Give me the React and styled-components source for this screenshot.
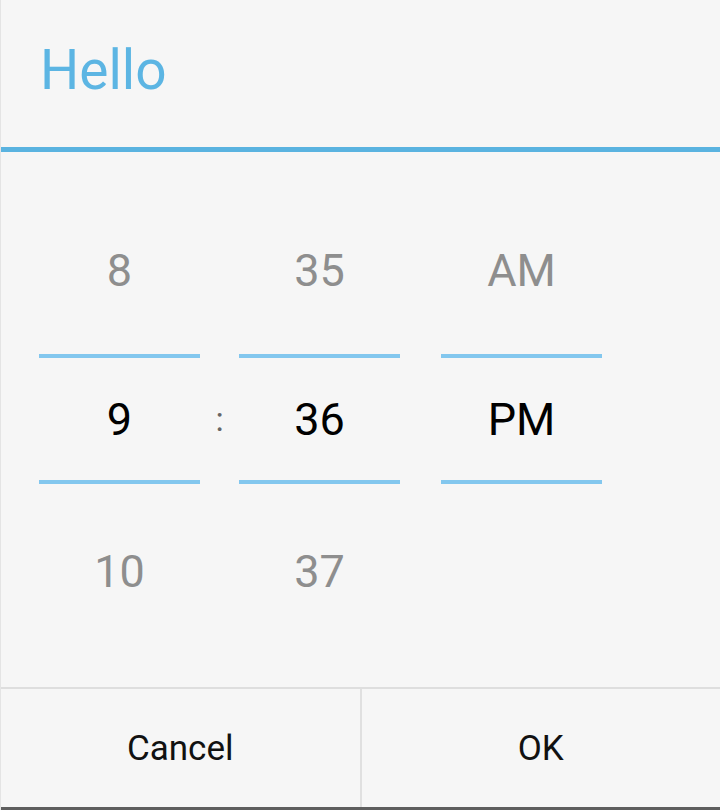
import React from "react";
import styled, { createGlobalStyle } from "styled-components";

const Global = createGlobalStyle`
  html, body { margin: 0; padding: 0; background: #f6f6f6; }
  body { font-family: Roboto, "Noto Sans", "Liberation Sans", sans-serif; }
  * { box-sizing: border-box; }
`;

const Dialog = styled.div`
  width: 720px;
  height: 810px;
  background: #f6f6f6;
  border-left: 1px solid #e4e4e4;
  display: flex;
  flex-direction: column;
`;

const Header = styled.div`
  height: 147px;
  padding: 38px 0 0 39px;
  font-size: 55px;
  line-height: 64px;
  color: #5cb5e3;
`;

const TitleDivider = styled.div`
  height: 5px;
  background: #5ab3e0;
`;

const PickerArea = styled.div`
  height: 535px;
  padding: 34px 0 0 38px;
  display: flex;
  align-items: flex-start;
`;

const Column = styled.div`
  width: 161px;
  display: flex;
  flex-direction: column;
`;

const Item = styled.div`
  height: ${(p) => p.$h}px;
  display: flex;
  align-items: center;
  justify-content: center;
  font-size: 45px;
  color: ${(p) => (p.$selected ? "#000" : "#8e8e8e")};
`;

const Line = styled.div`
  height: 4px;
  background: #83c7ee;
`;

const Separator = styled.div`
  width: ${(p) => p.$w}px;
  height: 466px;
  display: flex;
  align-items: center;
  justify-content: center;
  font-size: 34px;
  color: #666;
`;

const ButtonBar = styled.div`
  flex: 1;
  display: flex;
  border-top: 2px solid #dedede;
  border-bottom: 3px solid #5e5e5e;
`;

const Button = styled.div`
  flex: 1;
  display: flex;
  align-items: center;
  justify-content: center;
  font-size: 35px;
  color: #111;
  & + & {
    border-left: 2px solid #e0e0e0;
  }
`;

function Picker({ top, value, bottom }) {
  return (
    <Column>
      <Item $h={168}>{top}</Item>
      <Line />
      <Item $h={122} $selected>
        {value}
      </Item>
      <Line />
      <Item $h={174}>{bottom}</Item>
    </Column>
  );
}

export default function App() {
  return (
    <>
      <Global />
      <Dialog>
        <Header>Hello</Header>
        <TitleDivider />
        <PickerArea>
          <Picker top="8" value="9" bottom="10" />
          <Separator $w={39}>:</Separator>
          <Picker top="35" value="36" bottom="37" />
          <Separator $w={41} />
          <Picker top="AM" value="PM" bottom="" />
        </PickerArea>
        <ButtonBar>
          <Button>Cancel</Button>
          <Button>OK</Button>
        </ButtonBar>
      </Dialog>
    </>
  );
}
